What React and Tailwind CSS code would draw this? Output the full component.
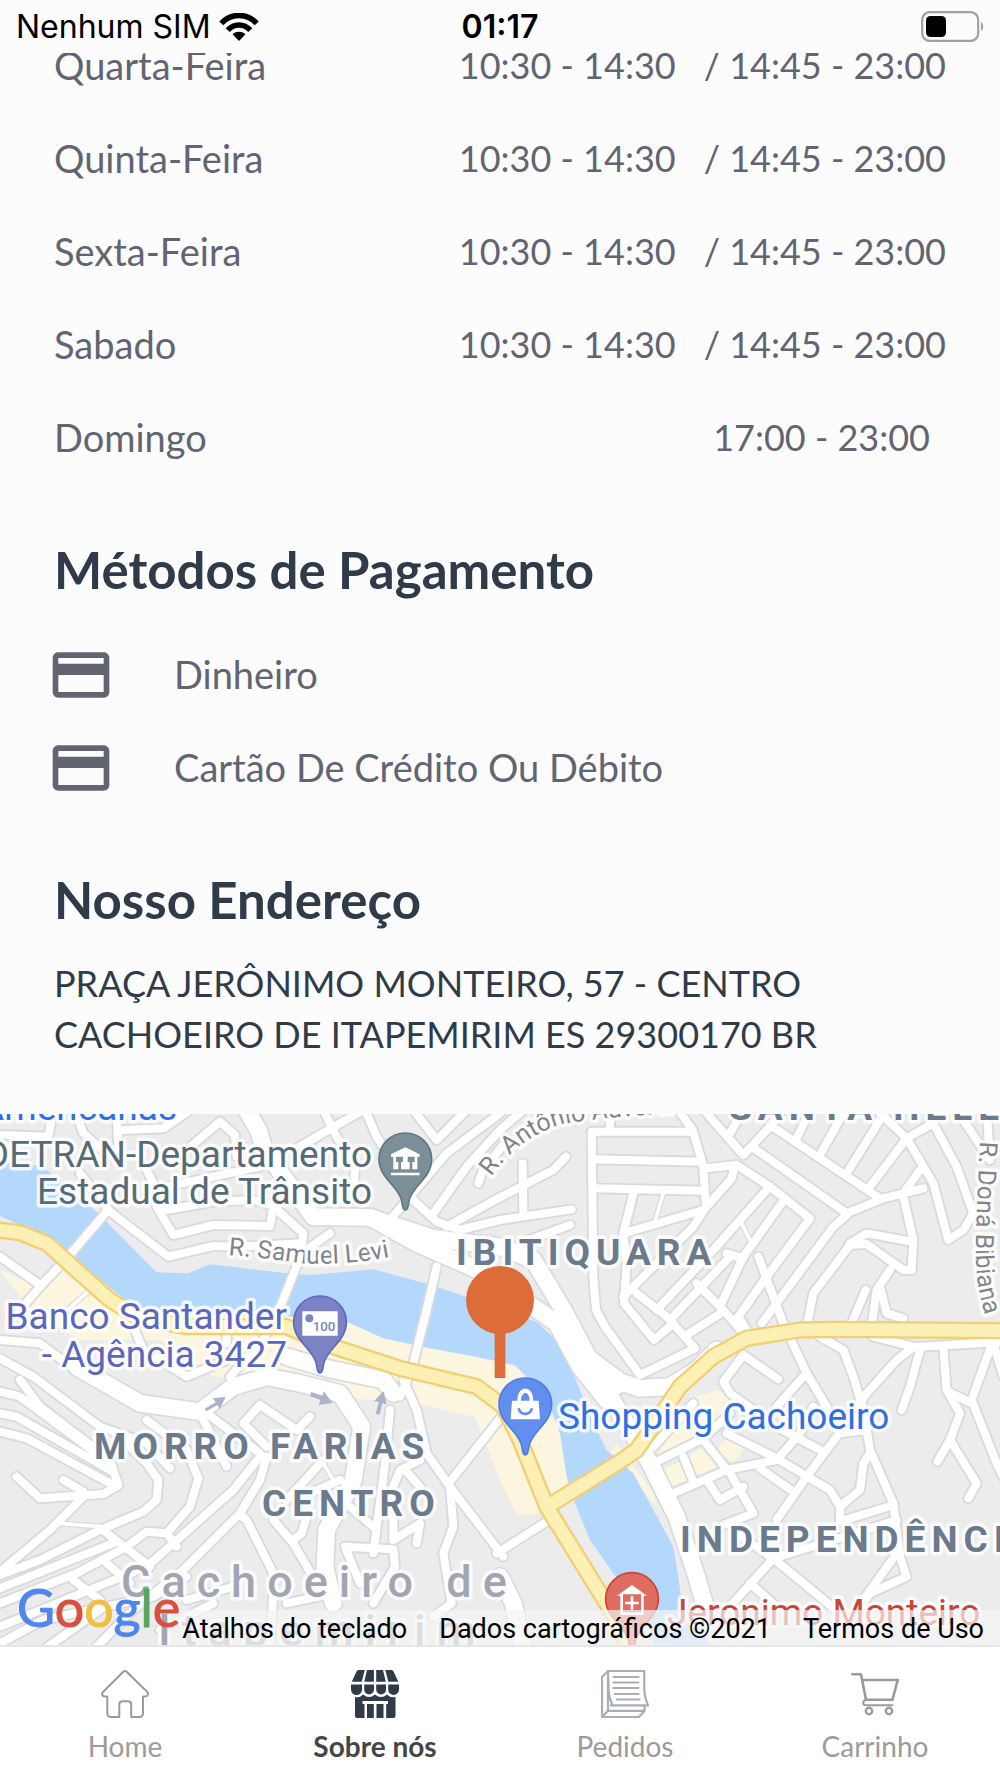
import { MdCreditCard } from 'react-icons/md'

const schedule = [
  { day: 'Quarta-Feira', hours: ['10:30 - 14:30', '/ 14:45 - 23:00'] },
  { day: 'Quinta-Feira', hours: ['10:30 - 14:30', '/ 14:45 - 23:00'] },
  { day: 'Sexta-Feira', hours: ['10:30 - 14:30', '/ 14:45 - 23:00'] },
  { day: 'Sabado', hours: ['10:30 - 14:30', '/ 14:45 - 23:00'] },
  { day: 'Domingo', hours: ['17:00 - 23:00'] },
]

const payments = ['Dinheiro', 'Cartão De Crédito Ou Débito']

const tabs = [
  { label: 'Home', Icon: HomeIcon },
  { label: 'Sobre nós', Icon: StoreIcon, active: true },
  { label: 'Pedidos', Icon: OrdersIcon },
  { label: 'Carrinho', Icon: CartIcon },
]

// street polylines, grouped by how wide they are drawn
const mainStreets = [
  '740,0 775,60 790,110 850,200 940,320 1110,322 1250,400 1400,465 1520,520',
  '1110,322 1300,385 1500,410 1600,450 1690,600 1790,790 1860,910 1950,1060 2030,1220 2090,1400 2130,1540',
  '1600,590 1670,640 1740,770 1820,870',
  '1760,740 1860,815 1920,835 2010,830 2090,780 2150,720',
  '230,770 420,880 600,905 700,830 800,800 900,820 1020,850 1085,950 1060,1110 980,1260 975,1370 1000,1480',
  '860,740 980,775 1150,810 1180,850',
  '1500,1400 1540,1480 1570,1620',
]

const streets = [
  '990,370 905,430 845,580 790,690 690,800',
  '1310,470 1280,600 1235,780 1200,860',
  '320,305 205,440 120,530 60,600',
  '240,190 330,305 505,440 640,408 720,410 900,400',
  '470,290 520,375 640,345 810,348 820,290 910,370 905,410',
  '440,180 500,300 640,275 760,270 830,290',
  '160,0 145,80 0,75',
  '225,0 250,70 330,140',
  '350,0 355,120',
  '370,60 490,55 570,0',
  '560,120 660,35 705,75 710,140',
  '780,170 640,200 500,230',
  '890,115 1090,0',
  '970,0 1010,80 1065,180 1060,260',
  '1100,10 1130,80 1175,150',
  '1170,330 1340,130 1500,10',
  '1240,0 1310,90 1400,0',
  '1300,310 1400,170 1500,60 1570,0',
  '1435,220 1445,190 1520,90',
  '1240,270 1310,335 1380,360 1500,330 1715,298',
  '1340,350 1500,262 1660,180 1698,140',
  '1568,160 1570,305',
  '1560,400 1710,345',
  '2070,65 1775,65 1780,500 1788,600 1815,650 1920,795 2085,715 2000,620 1910,550',
  '1780,148 2100,155',
  '1780,235 2110,242',
  '1830,0 1830,60',
  '2035,0 2078,60 2110,170 2118,290 2080,350 1960,470 1870,560',
  '2120,175 2205,165 2195,205 2120,290',
  '1900,250 1870,370 1880,460 1872,580 1962,690 2020,640',
  '1870,370 2110,300',
  '2120,10 2230,135 2310,50 2345,0',
  '2190,70 2230,0',
  '2210,165 2310,230 2430,325 2300,500 2215,620 2240,660',
  '2255,110 2540,310 2650,265 2770,235',
  '2310,45 2640,265',
  '2390,85 2430,0',
  '2465,125 2530,10',
  '2540,190 2640,30',
  '2610,230 2720,85 2630,0',
  '2720,85 2800,40 2870,170 2920,310 2890,360 2845,390 2800,220 2720,85',
  '2710,250 2760,180',
  '2870,0 2970,150 2960,0',
  '2710,260 2740,390 2735,480 2710,480 2600,402 2550,405 2440,550 2420,650',
  '2550,400 2600,370 2735,395',
  '2540,315 2500,350 2285,640',
  '2300,240 2140,420 1970,600',
  '2345,280 2230,440 2160,590',
  '2190,440 2010,630',
  '2180,430 2230,445',
  '2275,440 2350,640 2420,790 2480,890 2520,970 2600,960',
  '2060,675 2170,605',
  '2090,520 2170,600 2230,670',
  '2597,540 2555,640',
  '2670,480 2630,540 2615,645',
  '2640,530 2660,610 2710,625',
  '3010,695 2740,712 2690,750 2600,850 2580,880',
  '2460,680 2530,720 2560,800 2590,900 2610,1020 2680,1180 2700,1340 2720,1400 2610,1450 2590,1480',
  '2620,680 2740,710',
  '2830,710 2840,840 2880,910 2850,990 2930,1120 2905,1165',
  '2850,990 2812,1055',
  '2760,720 2730,830 2705,900',
  '2980,690 2940,800 2915,870 2990,1060 3020,1120',
  '2845,845 2915,880',
  '2980,700 3010,800',
  '2230,735 2335,808',
  '2230,735 2170,815 2190,850 2330,950 2460,1020',
  '2410,800 2330,890',
  '1960,1060 2110,985 2190,910',
  '2020,1150 2180,1080 2330,1050 2400,970 2440,890',
  '2110,990 2190,1090 2260,1210 2170,1245',
  '2050,1040 2080,1115',
  '2180,970 2330,1045 2490,1140 2520,1190 2580,1140 2590,1060 2610,1030',
  '2520,1190 2520,1235 2680,1185',
  '2330,1230 2420,1100 2510,980',
  '2280,1075 2380,1145',
  '2120,1110 2160,1170 2230,1130',
  '1640,1235 1490,1330',
  '2190,1490 2320,1345 2520,1510',
  '2250,1420 2330,1490',
  '2210,1270 2320,1345 2500,1290 2690,1230',
  '2690,1330 2590,1470',
  '1820,860 1880,825',
  '1960,1010 2080,880',
  '0,440 120,525',
  '0,690 120,700 200,760 400,870',
  '0,745 100,800 300,950 440,1000 510,1075',
  '60,810 120,890 330,1050 355,1125 310,1152 120,1165 50,1100',
  '0,845 60,860 330,1060',
  '0,910 50,920 340,1085',
  '0,965 80,985 350,1130',
  '190,1110 250,1145',
  '250,1160 150,1260 0,1385',
  '380,1000 440,1060 475,1110 470,1170 430,1205 300,1260 120,1350 0,1395',
  '440,930 560,1020 595,1105 570,1190 500,1270 440,1265 380,1310 230,1390 0,1480',
  '0,1435 350,1295',
  '315,1265 450,1370',
  '500,1270 530,1310',
  '780,1040 700,1140 520,1300 440,1370 0,1550',
  '800,1040 780,1110 720,1210 550,1380 400,1500 280,1620',
  '720,1215 740,1230 830,1410',
  '800,1010 730,940 780,885 890,960 930,920',
  '610,930 680,1070',
  '620,910 780,1030',
  '820,1230 880,1300 950,1420',
  '880,1290 905,1270 920,1220',
  '970,1050 860,1170',
  '1020,1110 930,1150',
  '1170,900 1155,1060 1120,1330',
  '1210,810 1250,900 1280,1030 1350,1130 1360,1250 1330,1330 1355,1480 1300,1520',
  '1350,1115 1520,900',
  '1350,1130 1510,1340',
  '1260,1050 1200,1080 1180,1130 1180,1290 1260,1240 1250,1300',
  '1050,1190 1120,1250',
  '1215,1080 1260,1130',
  '1120,1480 1185,1370 1180,1318 1035,1310 1080,1420',
  '0,1600 130,1530 460,1460 560,1400',
  '220,1410 300,1470',
  '320,1360 390,1420',
  '130,1620 300,1500',
  '640,1480 480,1560',
  '700,1430 560,1470',
  '820,1450 810,1620',
  '860,1480 1000,1450',
  '400,650 430,720 560,800 680,750',
  '680,640 680,700',
]

const alleys = [
  '1990,250 1960,350',
  '2220,330 2250,390',
  '2105,530 2160,590',
  '180,1240 300,1250',
  '970,1060 1000,1110',
  '270,540 190,610',
]

const highways = [
  '-20,358 60,368 140,400 240,490 330,570 420,625 560,650 860,650 1000,710 1200,775 1430,830 1510,890 1560,990 1640,1190 1850,1530 1890,1630',
  '3020,662 2500,658 2400,660 2240,685 2140,740 2040,830 1910,1020 1860,1055 1650,1185',
]

function Lines({ items, className }) {
  return items.map((points) => <polyline key={points} points={points} className={className} />)
}

function Pin({ x, y, className, children }) {
  return (
    <g transform={`translate(${x} ${y})`}>
      <path
        d="M0 152C-8 152-8 138-12 120C-26 76-79 54-79 0A79 79 0 0 1 79 0C79 54 26 76 12 120C8 138 8 152 0 152Z"
        strokeWidth="5"
        className={className}
      />
      {children}
    </g>
  )
}

function MapArrow({ d }) {
  return <path d={d} className="fill-[#adb1ca]" />
}

function MapDrawing() {
  return (
    <svg
      className="absolute inset-0 w-full h-full font-[Roboto,sans-serif]"
      viewBox="0 0 1000 531"
      preserveAspectRatio="xMidYMid slice"
      role="img"
      aria-label="Mapa de Cachoeiro de Itapemirim"
    >
      <defs>
        <path id="samuel" d="M228 141Q265 144 300 149Q345 152 395 142" />
        <path id="antonio" d="M491 63Q520 22 563 10Q600 3 690 -2" />
        <path id="dona" d="M980 27Q976 110 976 125Q974 170 987 206" />
      </defs>

      <rect width="1000" height="531" className="fill-[#ececec]" />

      {/* Terrain and streets are plotted on a grid three times as fine */}
      <g transform="translate(0 -4) scale(0.33333)" fill="none" strokeLinecap="round" strokeLinejoin="round">
        <path
          className="fill-[#fcf5e0]"
          d="M0 480L90 520 200 470 350 550 850 600 1040 630 1290 700 1500 750 1560 780 1680 960 1705 1110 1640 1190 1600 1215 1550 1215 1500 1110 1425 920 1240 880 1050 865 850 830 640 800 480 690 240 690 90 600Z"
        />
        <path
          className="fill-[#fcf5e0]"
          d="M2090 860L2150 840 2200 860 2180 920 2120 960 1960 1050ZM1985 1080L2040 1055 2060 1110 2010 1130ZM2065 1035L2110 1010 2150 1070 2090 1095ZM2150 1020L2190 975 2240 1005 2200 1060ZM1830 1030L1850 1000 1960 1150 1970 1190 1880 1080Z"
        />
        <path
          className="fill-[#b3d8fc]"
          d="M0 150L130 170 200 235 290 305 470 487 565 490 630 463 860 490 930 495 1120 478 1275 520 1400 560 1500 600 1610 635 1685 705 1740 840 1790 960 1820 1020 1900 1090 1960 1200 2020 1310 2035 1400 2045 1480 2100 1560 2140 1620 1970 1620 1930 1500 1840 1390 1770 1290 1725 1180 1700 1100 1680 970 1640 860 1545 765 1485 752 1400 735 1290 715 1150 685 1040 635 900 620 560 615 420 600 350 550 215 440 100 362 0 318Z"
        />
        <g className="stroke-[#d9dade]">
          <Lines items={alleys} className="[stroke-width:18]" />
          <Lines items={streets} className="[stroke-width:35]" />
          <Lines items={mainStreets} className="[stroke-width:60]" />
        </g>
        <g className="stroke-white">
          <Lines items={alleys} className="[stroke-width:11]" />
          <Lines items={streets} className="[stroke-width:24]" />
          <Lines items={mainStreets} className="[stroke-width:50]" />
        </g>
        <Lines items={highways} className="stroke-[#f1cf75] [stroke-width:52]" />
        <Lines items={highways} className="stroke-[#fdf0b5] [stroke-width:38]" />

        <MapArrow d="M614 896L647 877 638 865 677 861 659 897 652 885 619 904Z" />
        <MapArrow d="M934 846L967 857 971 844 998 879 956 885 961 870 930 858Z" />
        <MapArrow d="M1127 911L1137 876 1122 873 1151 844 1160 884 1147 880 1139 914Z" />
      </g>

      <g
        className="[paint-order:stroke] stroke-white/80 text-[37px]"
        strokeWidth="7"
        strokeLinejoin="round"
      >
        <g className="fill-[#6b7a8c] font-bold tracking-[6px]">
          <text x="729" y="6">SANTA HELENA</text>
          <text x="456" y="151">IBITIQUARA</text>
          <text x="94" y="345">MORRO FARIAS</text>
          <text x="262" y="402">CENTRO</text>
          <text x="680" y="438">INDEPENDÊNCIA</text>
        </g>
        <g className="fill-[#a2a6b2] font-medium text-[45px] tracking-[11px]">
          <text x="121" y="483">Cachoeiro de</text>
          <text x="158" y="532">Itapemirim</text>
        </g>
        <g className="fill-[#808489] text-[25px]">
          <text><textPath href="#samuel">R. Samuel Levi</textPath></text>
          <text><textPath href="#antonio">R. Antônio Auverci</textPath></text>
          <text><textPath href="#dona">R. Doná Bibiana</textPath></text>
        </g>
        <g className="fill-[#566b76]" textAnchor="end">
          <text x="372" y="53">DETRAN-Departamento</text>
          <text x="372" y="90">Estadual de Trânsito</text>
        </g>
        <g className="fill-[#5b67bc]" textAnchor="end">
          <text x="287" y="215">Banco Santander</text>
          <text x="287" y="253">- Agência 3427</text>
        </g>
        <text x="177" y="6" textAnchor="end" className="fill-[#2f6fe4]">Americanas</text>
        <text x="558" y="315" className="fill-[#2f6fe4]">Shopping Cachoeiro</text>
        <text x="667" y="511" className="fill-[#cb4236]">Jeronimo Monteiro</text>
      </g>

      <g transform="translate(0 -4) scale(0.33333)">
        <Pin x={1216} y={148} className="fill-[#7b8f99] stroke-[#5f7681]">
          <path
            className="fill-white"
            d="M0-36L-43-15V-8H-36V30H36V-8H43V-15ZM-28-8H-7V8H-13V30H-21V8H-28ZM7-8H28V8H21V30H13V8H7ZM-43 40H43V48H-43Z"
            fillRule="evenodd"
          />
        </Pin>
        <Pin x={960} y={637} className="fill-[#7b83c5] stroke-[#5f69b9]">
          <path className="fill-white" d="M-53-33H53V40H-53Z" />
          <circle cx="-32" cy="-12" r="12" className="fill-[#7b83c5]" />
          <text x="-22" y="27" className="fill-[#7b83c5] text-[40px] font-medium font-[Roboto,sans-serif]">100</text>
        </Pin>
        <Pin x={1576} y={883} className="fill-[#628eef] stroke-[#4a7de6]">
          <path className="fill-white" d="M-40-11H-24C-24-60 24-60 24-11H40L44 45H-44ZM-13-11H13C12-42-12-42-13-11Z" fillRule="evenodd" />
          <path className="stroke-[#628eef]" fill="none" strokeWidth="8" d="M-20 12C-16 34 16 34 20 12" />
        </Pin>
        <Pin x={1896} y={1467} className="fill-[#de6c60] stroke-[#cf4437]">
          <path
            className="fill-white"
            d="M0-42L-45-10H-35V48H35V-10H45ZM-27-14H27V40H-27Z"
            fillRule="evenodd"
          />
          <path className="stroke-white" strokeWidth="8" d="M0-8V32M-20 12H20" />
        </Pin>
        <path d="M1484 650H1516V804H1484Z" className="fill-[#dd6d38]" />
        <circle cx="1500" cy="570" r="102" className="fill-[#dd6d38]" />
      </g>
    </svg>
  )
}

function GoogleLogo() {
  return (
    <a
      href="#google"
      aria-label="Google"
      className="absolute left-[17px] bottom-0 font-[Lato,sans-serif] text-[52px] leading-[76px] [-webkit-text-stroke:1px_currentColor]"
    >
      <span className="text-[#5086ec]">G</span>
      <span className="text-[#d85040]">o</span>
      <span className="text-[#f2be42]">o</span>
      <span className="text-[#5086ec]">g</span>
      <span className="text-[#58a55c]">l</span>
      <span className="text-[#d85040]">e</span>
    </a>
  )
}

function HomeIcon() {
  return (
    <svg className="w-12 h-12" viewBox="0 0 48 48" fill="none" stroke="#9b9b9b" strokeWidth="2" strokeLinejoin="round">
      <path d="M22.3 1.8L2 22C0 24.2 1.4 26.4 4 26.4H6.3V43Q6.3 47 10.3 47H18.3V34.5Q18.3 31.3 21.5 31.3H27Q30.2 31.3 30.2 34.5V47H38Q42 47 42 43V26.4H44.2C47 26.4 48 24 46.3 22L25.7 1.8Q24 .3 22.3 1.8Z" />
    </svg>
  )
}

function StoreIcon() {
  return (
    <svg className="w-12 h-12" viewBox="0 0 48 48" fill="#303a48">
      <path d="M7.5 0H13.8L10.7 11.7H.8L5.5 1.5Q6.2 0 7.5 0ZM16 0H22.9V11.7H13.3ZM25.2 0H32L34.8 11.7H25.2ZM34.3 0H40.5Q42 0 42.6 1.5L47.3 11.7H37.3Z" />
      <path d="M0 14.5H11V19.5A5.5 5.5 0 0 1 0 19.5ZM13.2 14.5H23V19.5A4.9 4.9 0 0 1 13.2 19.5ZM25.2 14.5H35V19.5A4.9 4.9 0 0 1 25.2 19.5ZM37.2 14.5H48V19.5A5.4 5.4 0 0 1 37.2 19.5Z" />
      <path d="M4 27Q9 28 12 24.5 18 29.5 24 24.5 30 29.5 36 24.5 39 28 44.5 27V46Q44.5 48 42.5 48H35.2V34H37V31H11.5V34H13.5V48H6Q4 48 4 46Z" />
      <path d="M16 34H22.8V48H16ZM25.5 34H32.5V48H25.5Z" />
    </svg>
  )
}

function OrdersIcon() {
  return (
    <svg className="w-12 h-12" viewBox="0 0 48 48" fill="none" stroke="#a9adb5" strokeWidth="2.2" strokeLinejoin="round">
      <path d="M7 1H43.3V20C43.3 26 45 30 47 35.3H11.5C8.5 29 7.5 24 7.5 17ZM7 1L1 7V47H38L43.5 41V36" />
      <path d="M1 47L7 40.8V8M7 40.8H43M9 35.3H12" />
      <path strokeLinecap="round" d="M12.5 7H37.5M12.5 12.5H37.5M12.5 18H37.5M14 24H37.5M16 29.5H38.5" />
    </svg>
  )
}

function CartIcon() {
  return (
    <svg className="w-12 h-12" viewBox="0 0 48 48" fill="none" stroke="#9b9b9b" strokeWidth="2" strokeLinecap="round" strokeLinejoin="round">
      <path strokeWidth="2.6" d="M1.3 4.2H10L15 29.7H41.5L46.8 10H12" />
      <path d="M15 29.7C11 31 11.5 35.3 15 35.3H41.5" />
      <circle cx="18" cy="41" r="3.2" strokeWidth="2.4" />
      <circle cx="38" cy="41" r="3.2" strokeWidth="2.4" />
    </svg>
  )
}

function StatusBar() {
  return (
    <header className="relative z-10 h-[53px] shrink-0 grid grid-cols-3 items-center px-4 bg-[#fcfcfc] font-[Inter,sans-serif] text-[32px] leading-9 text-black">
      <div className="flex items-center gap-2 whitespace-nowrap">
        <span>Nenhum SIM</span>
        <svg className="w-10 h-7" viewBox="0 0 40 28" fill="none" stroke="#000">
          <path strokeWidth="5.5" d="M2.3 10.3C12-.2 28-.2 37.7 10.3" />
          <path strokeWidth="5.5" d="M8.7 17.2C15 10.3 25 10.3 31.3 17.2" />
          <path fill="#000" stroke="none" d="M20 28L13.5 21.3C17 18 23 18 26.5 21.3Z" />
        </svg>
      </div>
      <div className="text-center font-semibold">01:17</div>
      <svg className="w-[63px] h-[31px] justify-self-end" viewBox="0 0 63 31" fill="none">
        <rect x="1.2" y="1.2" width="56" height="28.6" rx="7.5" stroke="#a0a0a0" strokeWidth="2.2" />
        <rect x="5" y="5" width="20" height="21" rx="4.5" fill="#000" />
        <path d="M60 11C63 12 63 19 60 20Z" fill="#a0a0a0" />
      </svg>
    </header>
  )
}

export default function App() {
  return (
    <div className="min-h-screen flex flex-col bg-[#fcfcfc] font-[Lato,sans-serif] text-[#626472]">
      <StatusBar />

      <main className="flex-1 flex flex-col overflow-hidden">
        {/* Opening hours, scrolled partly under the status bar */}
        <ul className="-mt-[34px] px-[54px] text-[38px] leading-[51px]">
          {schedule.map(({ day, hours }) => (
            <li key={day} className="h-[93px] flex items-center justify-between">
              <span>{day}</span>
              <span className={hours.length > 1 ? 'flex gap-7 text-[36px]' : 'flex pr-4 text-[36px]'}>
                {hours.map((range) => (
                  <span key={range}>{range}</span>
                ))}
              </span>
            </li>
          ))}
        </ul>

        <section className="px-[54px] mt-14">
          <h2 className="text-[51px] leading-[60px] font-bold text-[#303b4a]">Métodos de Pagamento</h2>
          <ul className="mt-7 text-[38px] leading-[51px]">
            {payments.map((name) => (
              <li key={name} className="h-[93px] flex items-center gap-[59px]">
                <MdCreditCard className="w-[68px] h-[68px] -ml-[7px] shrink-0" />
                <span>{name}</span>
              </li>
            ))}
          </ul>
        </section>

        <section className="px-[54px] mt-14 text-[#303b4a]">
          <h2 className="text-[51px] leading-[60px] font-bold">Nosso Endereço</h2>
          <address className="mt-7 not-italic text-[36px] leading-[51px]">
            PRAÇA JERÔNIMO MONTEIRO, 57 - CENTRO
            <br />
            CACHOEIRO DE ITAPEMIRIM ES 29300170 BR
          </address>
        </section>

        <section className="relative flex-1 min-h-[480px] mt-[54px] overflow-hidden">
          <MapDrawing />
          <div className="absolute bottom-0 right-0 flex gap-8 pt-1 pl-3 pr-4 bg-[#f5f5f5]/70 font-[Roboto,sans-serif] text-[27px] leading-[31px] text-black whitespace-nowrap">
            <button type="button">Atalhos do teclado</button>
            <span>Dados cartográficos ©2021</span>
            <a href="#termos">Termos de Uso</a>
          </div>
          <GoogleLogo />
        </section>
      </main>

      <nav className="shrink-0 grid grid-cols-4 h-[133px] pt-[23px] bg-white border-t-2 border-[#e6e6e6]">
        {tabs.map(({ label, Icon, active }) => (
          <a
            key={label}
            href="#"
            aria-current={active ? 'page' : undefined}
            className={`flex flex-col items-center gap-2.5 text-[28px] leading-9 ${
              active ? 'font-bold text-[#454545]' : 'text-[#9b9b9b]'
            }`}
          >
            <Icon />
            <span>{label}</span>
          </a>
        ))}
      </nav>
    </div>
  )
}
